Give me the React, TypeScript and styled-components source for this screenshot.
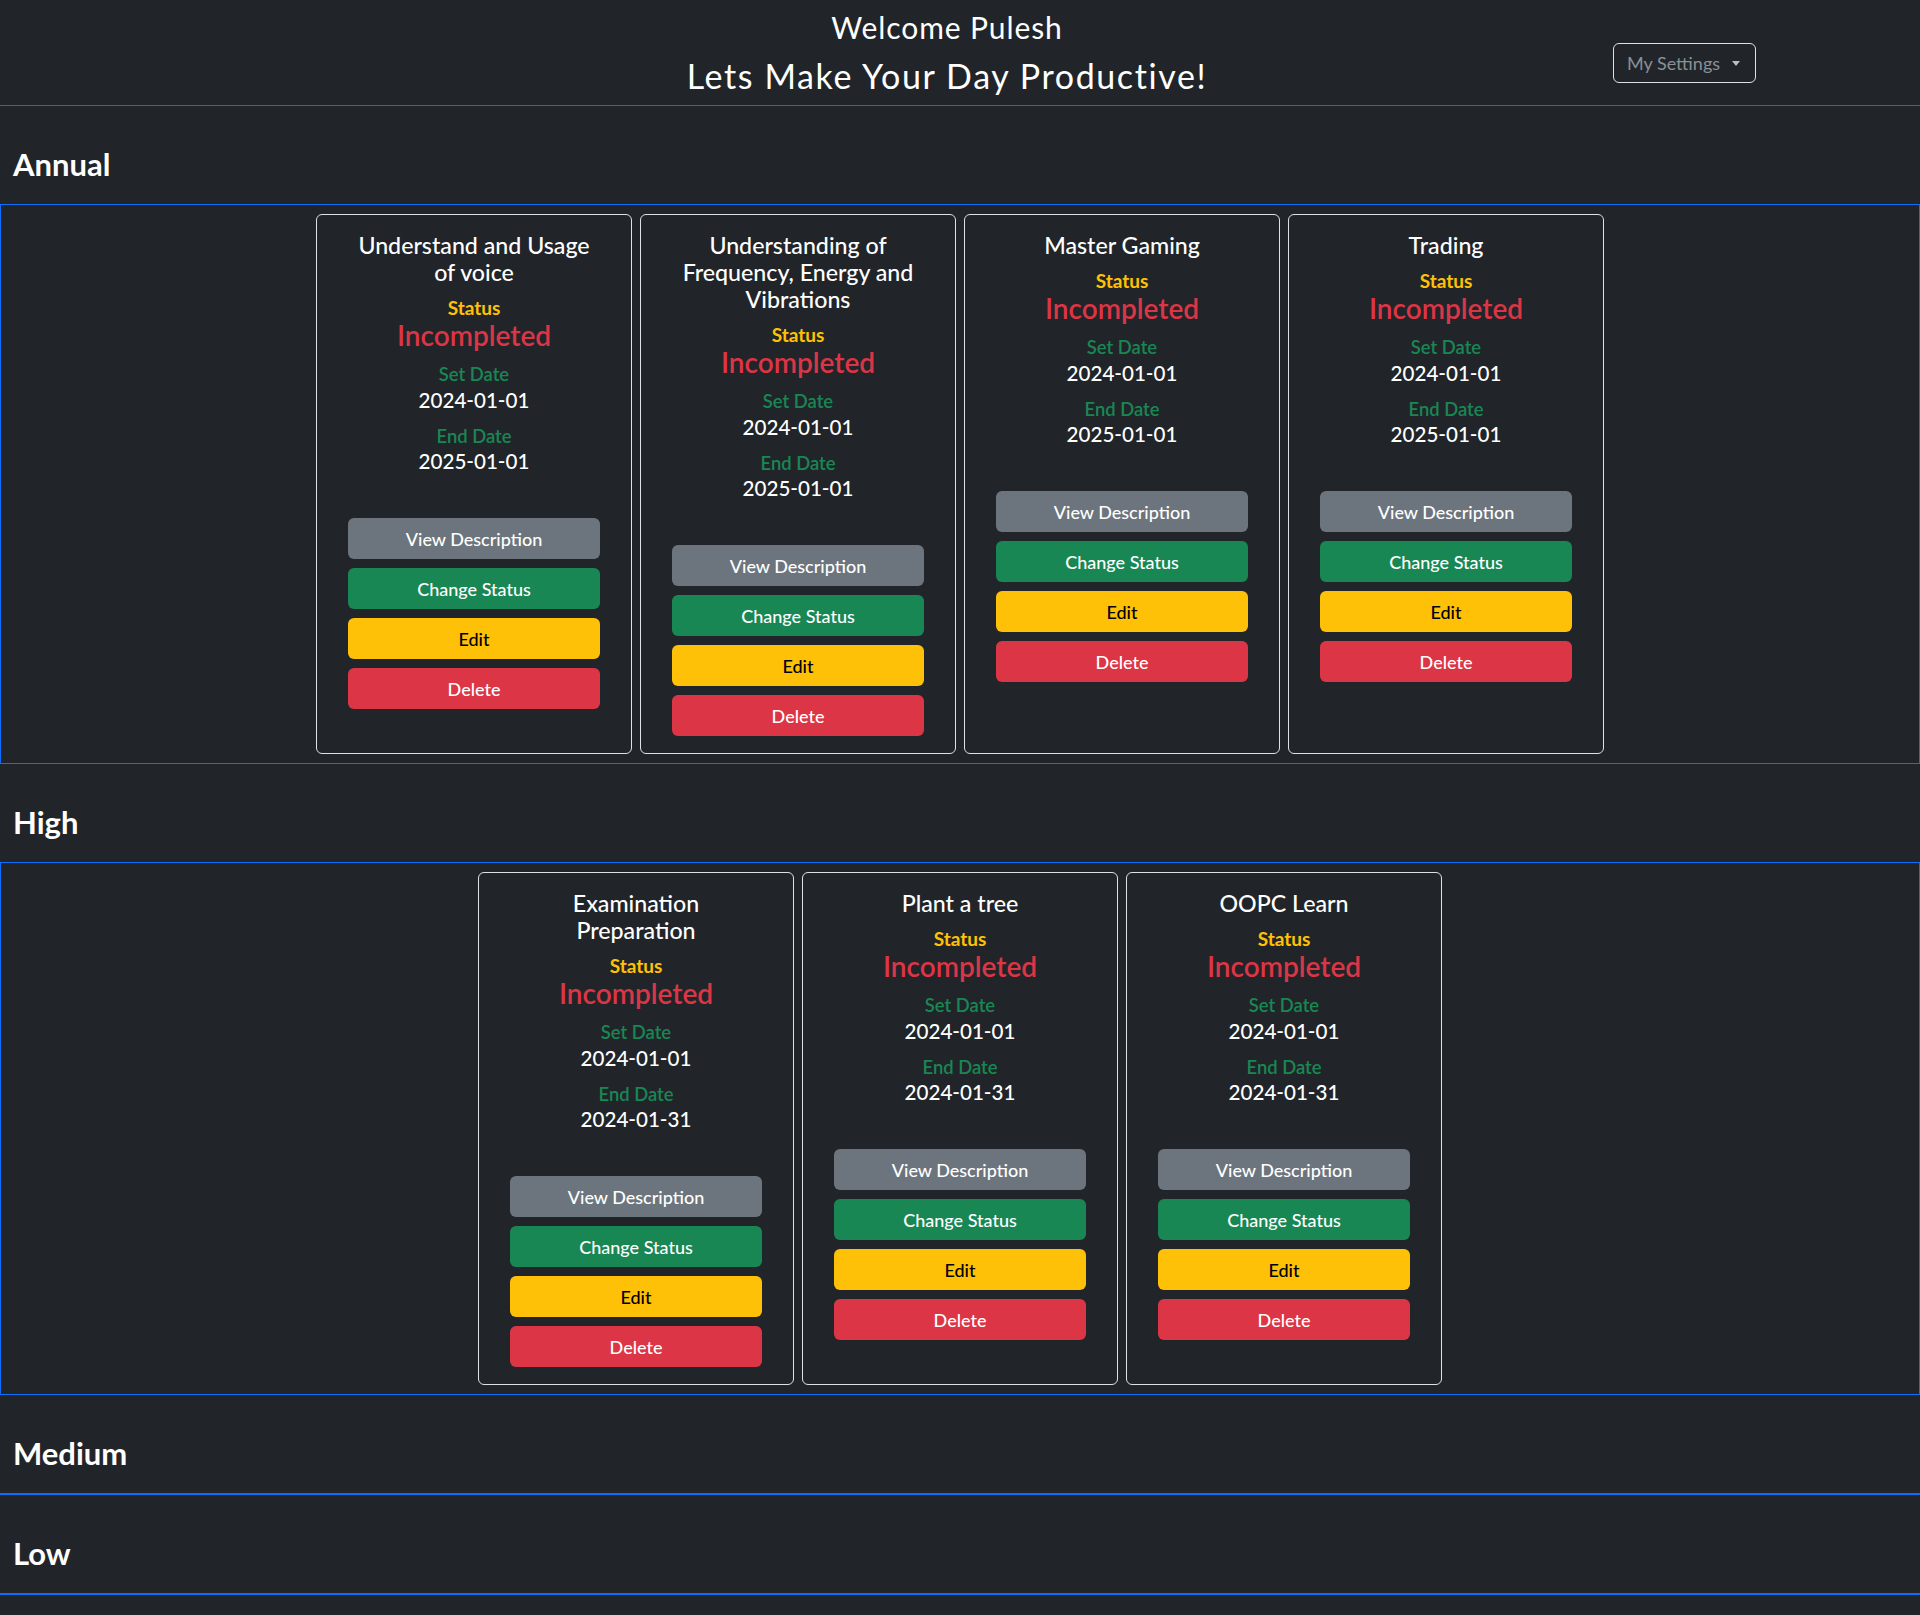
import React from "react";
import styled, { createGlobalStyle } from "styled-components";

const GlobalStyle = createGlobalStyle`
  html, body {
    margin: 0;
    padding: 0;
    background: #212529;
    color: #ffffff;
    font-family: "Lato", "Open Sans", sans-serif;
  }
  * { box-sizing: border-box; }
`;

type Task = { title: string; setDate: string; endDate: string };
type Section = { name: string; tasks: Task[] };

const sections: Section[] = [
  {
    name: "Annual",
    tasks: [
      { title: "Understand and Usage of voice", setDate: "2024-01-01", endDate: "2025-01-01" },
      { title: "Understanding of Frequency, Energy and Vibrations", setDate: "2024-01-01", endDate: "2025-01-01" },
      { title: "Master Gaming", setDate: "2024-01-01", endDate: "2025-01-01" },
      { title: "Trading", setDate: "2024-01-01", endDate: "2025-01-01" },
    ],
  },
  {
    name: "High",
    tasks: [
      { title: "Examination Preparation", setDate: "2024-01-01", endDate: "2024-01-31" },
      { title: "Plant a tree", setDate: "2024-01-01", endDate: "2024-01-31" },
      { title: "OOPC Learn", setDate: "2024-01-01", endDate: "2024-01-31" },
    ],
  },
  { name: "Medium", tasks: [] },
  { name: "Low", tasks: [] },
];

const Page = styled.div`
  min-height: 1615px;
  background: #212529;
`;

const Header = styled.header`
  display: grid;
  grid-template-columns: minmax(0, 1fr) auto minmax(0, 1fr);
  align-items: start;
  padding: 10px 0 10px;
  border-bottom: 1px solid #5c5f63;
`;

const TitleBlock = styled.div`
  grid-column: 2;
  display: flex;
  flex-direction: column;
  align-items: center;
  gap: 12px;
  margin-right: 26px;
`;

const Welcome = styled.h3`
  margin: 0;
  font-size: 30px;
  line-height: 34px;
  font-weight: 400;
  letter-spacing: 0.9px;
`;

const Motto = styled.h2`
  margin: 0;
  font-size: 34px;
  line-height: 39px;
  font-weight: 400;
  letter-spacing: 1.6px;
`;

const SettingsArea = styled.div`
  grid-column: 3;
  display: flex;
  justify-content: flex-end;
  padding: 33px 164px 0 0;
`;

const SettingsButton = styled.button`
  display: flex;
  align-items: center;
  gap: 12px;
  height: 40px;
  width: 143px;
  padding: 0 13px;
  background: transparent;
  border: 1px solid #dee2e6;
  border-radius: 6px;
  color: #8a9096;
  font-family: "Lato", sans-serif;
  font-size: 18px;
  white-space: nowrap;
`;

const Caret = styled.span`
  flex: none;
  width: 0;
  height: 0;
  border-left: 4.5px solid transparent;
  border-right: 4.5px solid transparent;
  border-top: 5px solid #b9bec3;
`;

const SectionTitle = styled.h2`
  margin: 39px 0 21px;
  padding-left: 13px;
  font-size: 31px;
  line-height: 38px;
  font-weight: 700;
`;

const Box = styled.div`
  border: 1px solid #0d6efd;
`;

const CardRow = styled.div`
  display: flex;
  justify-content: center;
  align-items: stretch;
  gap: 8px;
  padding: 9px;
`;

const Card = styled.div`
  width: 316px;
  border: 1px solid #dee2e6;
  border-radius: 6px;
  padding: 16px 31px 17px;
  display: flex;
  flex-direction: column;
  align-items: center;
  text-align: center;
`;

const CardTitle = styled.h5`
  margin: 1px 0 0;
  padding: 0 6px;
  font-size: 23.2px;
  line-height: 27px;
  font-weight: 500;
`;

const StatusLabel = styled.div`
  margin-top: 11px;
  font-size: 19px;
  line-height: 22px;
  font-weight: 700;
  color: #ffc107;
`;

const StatusValue = styled.div`
  margin-top: -1px;
  font-size: 28px;
  line-height: 34px;
  font-weight: 600;
  color: #dc3545;
`;

const DateLabel = styled.div<{ $gap: number }>`
  margin-top: ${(p) => p.$gap}px;
  font-size: 18.4px;
  line-height: 22px;
  font-weight: 600;
  color: #198754;
`;

const DateValue = styled.div<{ $gap: number }>`
  margin-top: ${(p) => p.$gap}px;
  font-size: 20.6px;
  line-height: 26px;
  font-weight: 500;
`;

const Actions = styled.div`
  margin-top: 44px;
  width: 100%;
  display: flex;
  flex-direction: column;
  gap: 9px;
`;

const variants = {
  secondary: { bg: "#6c757d", fg: "#ffffff" },
  success: { bg: "#198754", fg: "#ffffff" },
  warning: { bg: "#ffc107", fg: "#000000" },
  danger: { bg: "#dc3545", fg: "#ffffff" },
};

const ActionButton = styled.button<{ $variant: keyof typeof variants }>`
  width: 100%;
  height: 41px;
  border: none;
  border-radius: 6px;
  background: ${(p) => variants[p.$variant].bg};
  color: ${(p) => variants[p.$variant].fg};
  font-family: "Lato", sans-serif;
  font-size: 18px;
  font-weight: 500;
`;

const TaskCard: React.FC<{ task: Task }> = ({ task }) => (
  <Card>
    <CardTitle>{task.title}</CardTitle>
    <StatusLabel>Status</StatusLabel>
    <StatusValue>Incompleted</StatusValue>
    <DateLabel $gap={11}>Set Date</DateLabel>
    <DateValue $gap={2}>{task.setDate}</DateValue>
    <DateLabel $gap={12}>End Date</DateLabel>
    <DateValue $gap={1}>{task.endDate}</DateValue>
    <Actions>
      <ActionButton $variant="secondary">View Description</ActionButton>
      <ActionButton $variant="success">Change Status</ActionButton>
      <ActionButton $variant="warning">Edit</ActionButton>
      <ActionButton $variant="danger">Delete</ActionButton>
    </Actions>
  </Card>
);

export default function App() {
  return (
    <Page>
      <GlobalStyle />
      <Header>
        <TitleBlock>
          <Welcome>Welcome Pulesh</Welcome>
          <Motto>Lets Make Your Day Productive!</Motto>
        </TitleBlock>
        <SettingsArea>
          <SettingsButton>
            My Settings <Caret />
          </SettingsButton>
        </SettingsArea>
      </Header>
      {sections.map((s) => (
        <section key={s.name}>
          <SectionTitle>{s.name}</SectionTitle>
          <Box>
            {s.tasks.length > 0 && (
              <CardRow>
                {s.tasks.map((t) => (
                  <TaskCard key={t.title} task={t} />
                ))}
              </CardRow>
            )}
          </Box>
        </section>
      ))}
    </Page>
  );
}
